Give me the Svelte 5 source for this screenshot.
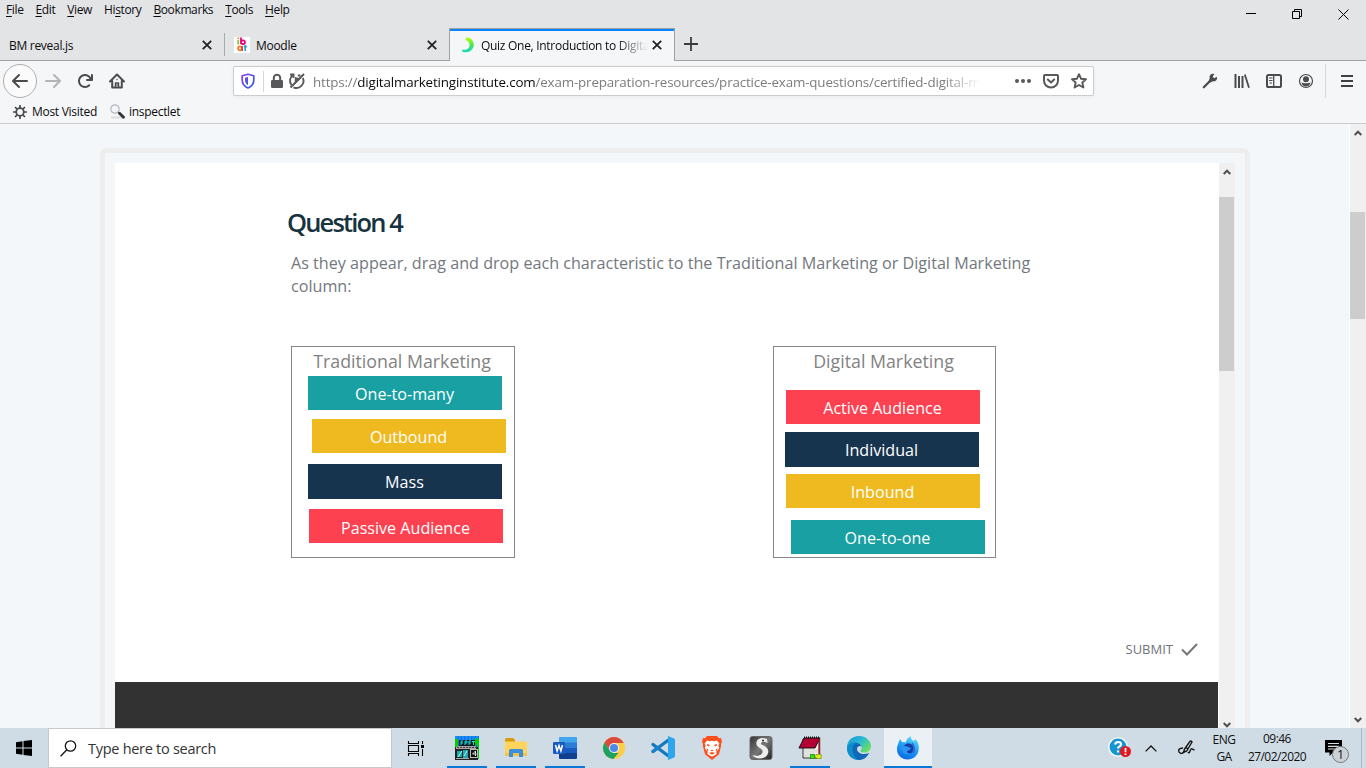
<script>
  const menus = ['File', 'Edit', 'View', 'History', 'Bookmarks', 'Tools', 'Help'];
  const keys = [0, 0, 0, 2, 0, 0, 0];
  const columns = [
    {
      title: 'Traditional Marketing',
      chips: [
        { text: 'One-to-many', color: '#18a0a3', x: 16, y: 29, h: 34 },
        { text: 'Outbound', color: '#efb920', x: 20, y: 72, h: 34 },
        { text: 'Mass', color: '#17344f', x: 16, y: 117, h: 35 },
        { text: 'Passive Audience', color: '#fe4150', x: 17, y: 162, h: 34 }
      ]
    },
    {
      title: 'Digital Marketing',
      chips: [
        { text: 'Active Audience', color: '#fe4150', x: 12, y: 43, h: 34 },
        { text: 'Individual', color: '#17344f', x: 11, y: 85, h: 35 },
        { text: 'Inbound', color: '#efb920', x: 12, y: 127, h: 34 },
        { text: 'One-to-one', color: '#18a0a3', x: 17, y: 173, h: 34 }
      ]
    }
  ];
</script>

{#snippet closeMark()}
  <svg class="close" width="10" height="10" viewBox="0 0 10 10"><path d="M.8.8l8.4 8.4M9.2.8L.8 9.2" stroke="#222" stroke-width="1.8" /></svg>
{/snippet}

{#snippet arrow(down)}
  <svg width="8" height="6" viewBox="0 0 8 6"><path d={down ? 'M.7 1L4 4.3 7.3 1' : 'M.7 5L4 1.7 7.3 5'} fill="none" stroke="#505050" stroke-width="2" /></svg>
{/snippet}

<div class="screen">
  <header class="titlebar">
    <div class="menurow">
      <nav>
        {#each menus as m, i}
          <span>{m.slice(0, keys[i])}<u>{m[keys[i]]}</u>{m.slice(keys[i] + 1)}</span>
        {/each}
      </nav>
      <div class="winctl">
        <svg width="10" height="10" viewBox="0 0 10 10"><path d="M0 4.5h10" stroke="#000" /></svg>
        <svg width="10" height="10" viewBox="0 0 10 10" fill="none" stroke="#000"><path d="M.5 2.5h7v7h-7zM2.500 2.500v-2h7v7h-2" /></svg>
        <svg width="11" height="11" viewBox="0 0 11 11"><path d="M.5.5l10 10M10.500.5l-10 10" stroke="#000" /></svg>
      </div>
    </div>
    <div class="tabs">
      <div class="tab first"><span class="label">BM reveal.js</span>{@render closeMark()}</div>
      <div class="tab second">
        <svg class="fav" width="16" height="16" viewBox="0 0 16 16">
          <path fill="#fff" d="M0 0h16v16H0z" />
          <path d="M4.200 3v4.500" stroke="#8cc63f" stroke-width="1.800" /><path d="M4.200.6v1.500" stroke="#f7931e" stroke-width="1.800" />
          <path d="M7 .5v6.500M7 5.200a2 1.900 0 1 1 0 .1" fill="none" stroke="#e6007e" stroke-width="1.800" />
          <ellipse cx="6" cy="11.300" rx="2" ry="2" fill="none" stroke="#f47b20" stroke-width="1.800" /><path d="M8.200 9v5" stroke="#e6382e" stroke-width="1.500" />
          <path d="M11.200 8v6M9.800 9.700h3" stroke="#1fa6dc" stroke-width="1.700" />
        </svg>
        <span class="label">Moodle</span>{@render closeMark()}
      </div>
      <div class="tab active">
        <svg class="fav" width="16" height="16" viewBox="0 0 16 16">
          <defs><linearGradient id="ring" x1="0" y1="0" x2="0" y2="1"><stop stop-color="#b6ff00" /><stop offset=".55" stop-color="#42e35f" /><stop offset="1" stop-color="#12d8c4" /></linearGradient></defs>
          <path d="M5 .5C9 0 12.800 3.200 12.800 7.800 12.800 12.500 8 16.800 1.500 14.800L1 12.500C5.500 13.500 8.600 11.500 8.600 8 8.600 5 7 3.500 4.700 3.200z" fill="url(#ring)" />
        </svg>
        <span class="label fade">Quiz One, Introduction to Digita</span>{@render closeMark()}
      </div>
      <svg class="plus" width="14" height="14" viewBox="0 0 14 14"><path d="M7 0v14M0 7h14" stroke="#3b3c3d" stroke-width="1.800" /></svg>
    </div>
  </header>

  <div class="toolbar">
    <div class="navbtns">
      <span class="back"><svg width="16" height="16" viewBox="0 0 16 16" fill="none" stroke="#4b4b4e" stroke-width="2" stroke-linecap="round" stroke-linejoin="round"><path d="M15 8H1.500M7 2L1 8l6 6" /></svg></span>
      <svg width="16" height="16" viewBox="0 0 16 16" fill="none" stroke="#b4b5b7" stroke-width="2" stroke-linecap="round" stroke-linejoin="round"><path d="M1 8h13.500M9 2l6 6-6 6" /></svg>
      <svg width="16" height="16" viewBox="0 0 16 16" fill="#4b4b4e"><path d="M15 1a1 1 0 0 0-1 1v2.418A6.995 6.995 0 1 0 8 15a6.954 6.954 0 0 0 4.950-2.050 1 1 0 0 0-1.414-1.414A5.019 5.019 0 1 1 12.549 6H10a1 1 0 0 0 0 2h5a1 1 0 0 0 1-1V2a1 1 0 0 0-1-1z" /></svg>
      <svg width="16" height="16" viewBox="0 0 16 16" fill="none" stroke="#4b4b4e" stroke-width="2" stroke-linecap="round" stroke-linejoin="round"><path d="M1 8.500L8 1.500l7 7M3.200 8v6.500h9.600V8" /><path d="M6.500 14v-4h3v4" stroke-width="1.500" /><path d="M8 6.500v.2M8 11.700v.5" stroke-width="1.300" /></svg>
    </div>
    <div class="urlbar">
      <svg class="shield" width="14" height="16" viewBox="0 0 14 16"><defs><linearGradient id="sh" x2="1" y2="1"><stop stop-color="#8a3cf0" /><stop offset="1" stop-color="#2b5fe0" /></linearGradient></defs><path d="M7 1.200l5.800 1.500V7c0 4-2.300 6.500-5.800 8C3.500 13.500 1.200 11 1.200 7V2.700z" fill="none" stroke="url(#sh)" stroke-width="1.700" stroke-linejoin="round" /><path d="M7 4v8.200C5 11 4 9.300 4 7V4.700z" fill="url(#sh)" /></svg>
      <i class="vsep"></i>
      <svg class="lock" width="12" height="14" viewBox="0 0 12 14"><path d="M2.800 7V4a3.200 3.200 0 0 1 6.400 0v3" fill="none" stroke="#58585a" stroke-width="2" /><rect y="6" width="12" height="8" rx="1.200" fill="#58585a" /></svg>
      <svg class="auto" width="16" height="16" viewBox="0 0 16 16" fill="none" stroke="#58585a" stroke-width="1.900"><path d="M1 1.500h3.500V5M4.200 1.800A7 7 0 0 0 2.500 12M4.500 14.300A7 7 0 0 0 13.800 5M11.500 2.500H8.800" /><path d="M5.800 4v7l6-5.500z" fill="#58585a" stroke="none" /><path d="M1.500 14.500L15 1" /></svg>
      <span class="url">https://<b>digitalmarketinginstitute.com</b>/exam-preparation-resources/practice-exam-questions/certified-digital-m</span>
      <svg class="dots" width="16" height="4" viewBox="0 0 16 4" fill="#58585a"><circle cx="2" cy="2" r="2" /><circle cx="8" cy="2" r="2" /><circle cx="14" cy="2" r="2" /></svg>
      <svg width="16" height="16" viewBox="0 0 16 16" fill="none" stroke="#58585a" stroke-width="2" stroke-linecap="round" stroke-linejoin="round"><path d="M2 2h12a1 1 0 0 1 1 1v4.500a7 7 0 0 1-14 0V3a1 1 0 0 1 1-1z" /><path d="M4.800 6.500L8 9.500l3.200-3" /></svg>
      <svg width="16" height="16" viewBox="0 0 16 16" fill="none" stroke="#58585a" stroke-width="1.900" stroke-linejoin="round"><path d="M8 1.200l2 4.500 5 .5-3.700 3.300 1.100 5L8 12l-4.400 2.500 1.100-5L1 6.200l5-.5z" /></svg>
    </div>
    <div class="tools">
      <svg width="16" height="16" viewBox="0 0 16 16"><path d="M1.800 14.200L9.500 6.500" stroke="#4b4b4e" stroke-width="2.300" stroke-linecap="round" /><path d="M14.800 3.800l-2.600 1.500-1.500-1.500L12.300 1C9.500.3 7 2.300 7.700 5.200L6.500 8.500l1.400 1.300 3-1.500c3 .6 4.800-2 3.900-4.500z" fill="#4b4b4e" /></svg>
      <svg width="16" height="16" viewBox="0 0 16 16" fill="none" stroke="#4b4b4e" stroke-width="2"><path d="M1.500 1v14M5 3v12M8.500 3v12" /><path d="M10.800 1.500L15 14.700" stroke-width="1.800" /></svg>
      <svg width="16" height="16" viewBox="0 0 16 16" fill="none" stroke="#4b4b4e"><rect x="1" y="2" width="14" height="12" rx="1.600" stroke-width="2" /><path d="M7.700 2v12" stroke-width="1.300" /><path d="M3 5h3.500M3 7.500h3.500M3.500 10H6" /></svg>
      <svg width="16" height="16" viewBox="0 0 16 16"><circle cx="8" cy="8" r="6.500" fill="none" stroke="#4b4b4e" stroke-width="1.200" /><circle cx="8" cy="6.300" r="3" fill="#4b4b4e" /><path d="M3.500 9.500c1.500 1 7.500 1 9 0-.4 2.500-2.300 4-4.500 4s-4.100-1.500-4.500-4z" fill="#4b4b4e" /></svg>
      <i class="vsep tall"></i>
      <svg class="burger" width="12" height="12" viewBox="0 0 12 12"><path d="M0 1h12M0 6h12M0 11h12" stroke="#3f4042" stroke-width="2" /></svg>
    </div>
  </div>

  <div class="bookmarks">
    <svg width="14" height="14" viewBox="0 0 14 14" fill="none" stroke="#4b4b4e"><circle cx="7" cy="7" r="3.800" stroke-width="1.800" /><path d="M7 0v3M7 11v3M0 7h3M11 7h3M2 2l2.200 2.200M9.800 9.800L12 12M2 12l2.200-2.200M9.800 4.200L12 2" stroke-width="1.700" /></svg>
    <span class="mv">Most Visited</span>
    <svg width="15" height="15" viewBox="0 0 15 15"><path d="M1 13.500h12" stroke="#ddd" stroke-width="2" /><circle cx="5" cy="5" r="4.200" fill="#f2f5fa" stroke="#b5b8bb" stroke-width="1.200" /><path d="M8 8l2 1.500" stroke="#888" stroke-width="1.500" /><path d="M9.500 9.300l4 4" stroke="#333" stroke-width="2.800" stroke-linecap="round" /></svg>
    <span class="insp">inspectlet</span>
  </div>

  <main>
    <div class="pagebody">
      <div class="frame">
        <div class="quiz">
          <section>
            <h1>Question 4</h1>
            <p>As they appear, drag and drop each characteristic to the Traditional Marketing or Digital Marketing column:</p>
            <div class="columns">
              {#each columns as col}
                <div class="drop">
                  <h2>{col.title}</h2>
                  {#each col.chips as c}
                    <div class="chip" style="left:{c.x}px;top:{c.y}px;height:{c.h}px;background:{c.color}">{c.text}</div>
                  {/each}
                </div>
              {/each}
            </div>
            <div class="submit"><span>SUBMIT</span><svg width="17" height="13" viewBox="0 0 17 13"><path d="M1 6.500l5 5L16 1" fill="none" stroke="#777" stroke-width="2" /></svg></div>
          </section>
          <div class="dark"></div>
        </div>
        <div class="scroll inner">{@render arrow(false)}<i></i>{@render arrow(true)}</div>
      </div>
    </div>
    <div class="scroll outer">{@render arrow(false)}<i></i>{@render arrow(true)}</div>
  </main>

  <footer>
    <div class="start"><svg width="16" height="16" viewBox="0 0 16 16"><path d="M0 2.200L6.500 1.300V7.500H0zM7.500 1.100L16 0v7.500H7.500zM0 8.500h6.500v6.200L0 13.800zM7.500 8.500H16V16l-8.500-1.100z" /></svg></div>
    <div class="search">
      <svg width="17" height="17" viewBox="0 0 17 17" fill="none" stroke="#111" stroke-width="1.300"><circle cx="10.500" cy="6" r="5.200" /><path d="M6.800 9.800L.6 16.200" /></svg>
      <span>Type here to search</span>
    </div>
    <div class="taskview"><svg width="16" height="15" viewBox="0 0 16 15" fill="none" stroke="#000" stroke-width="1.100"><path d="M.5 0v2.500h10V0M.5 15v-2.500h10V15M.5 4.500h10v6H.5zM14.500 0v3M14.500 8v7" /><path d="M13 4h3v3h-3z" fill="#000" stroke="none" /></svg></div>
    <div class="apps">
      <div class="app open">
        <svg width="24" height="24" viewBox="0 0 24 24"><path fill="#1670ef" d="M0 0h24v11H0z" /><path d="M0 1h24M0 3h24" stroke="#14b7f2" stroke-dasharray="2 1.500" /><path fill="#0c0" d="M0 3h3v8H0zM20 2l4 1v20h-2V9h-2z" /><path fill="#0a1a20" d="M4 4h16v6H4z" /><path d="M6 9V5h2M6 7h2M10 9V5h2v2h-2M14 9V5h2M14 7h2M17 5.500h3M18.500 5v4" stroke="#18e4e4" fill="none" /><path fill="#222" d="M0 11h23v13H0z" /><path fill="#a5a5a5" d="M1 11l2-1h18v3H1z" /><path d="M2 11.500h20" stroke="#444" stroke-dasharray="2 1" /><path fill="#1ca7ab" d="M2 15h5v6H2zM8 14h5v8H8z" /><path d="M3 21l4-6M9 20l3-5" stroke="#b8ffff" /><path fill="#bbb" d="M15 13h8v9h-8z" /><path fill="#111" d="M16 14h6v7h-6z" /><path d="M20.500 20v-5l-3 3h4" stroke="#ddd" fill="none" /><path d="M1 22.500h13" stroke="#aaa" /></svg>
      </div>
      <div class="app open">
        <svg width="22" height="20" viewBox="0 0 22 20"><path fill="#d99a0b" d="M0 1.500Q0 0 1.500 0H8l2 2v4H0z" /><path fill="#ffd45c" d="M0 3.500h21q1 0 1 1V17q0 1-1 1H1q-1 0-1-1z" /><path fill="#f5c243" d="M0 15h22v2q0 1-1 1H1q-1 0-1-1z" /><path fill="#3b8edb" d="M4 19v-6.500Q4 11 5.500 11h11q1.500 0 1.500 1.500V19h-4v-4H8v4z" /></svg>
      </div>
      <div class="app open">
        <svg width="24" height="22" viewBox="0 0 24 22"><path fill="#41a5ee" d="M7 0h16q1 0 1 1v5H6V1q0-1 1-1z" /><path fill="#2b7cd3" d="M6 5.500h18V11H6z" /><path fill="#185abd" d="M6 11h18v5.500H6z" /><path fill="#103f91" d="M6 16h18v5q0 1-1 1H7q-1 0-1-1z" /><rect y="5" width="12" height="12" rx="1" fill="#185abd" /><path d="M2.500 8l1.600 6L6 8.500 7.900 14l1.600-6" fill="none" stroke="#fff" stroke-width="1.500" /></svg>
      </div>
      <div class="app">
        <svg width="22" height="22" viewBox="0 0 22 22"><circle cx="11" cy="11" r="11" fill="#ffcd43" /><path fill="#db4a3c" d="M1.500 5.500A11 11 0 0 1 20.500 5.500L20.700 6H11L6.700 13.500z" /><path fill="#1ba261" d="M1.500 5.500L6.700 13.500 11 16l-.6 6A11 11 0 0 1 1.500 5.500z" /><path fill="#1ba261" d="M6.500 13.200L11 16h4.500L10.400 22z" /><circle cx="11" cy="11" r="5" fill="#f5f5f5" /><circle cx="11" cy="11" r="4" fill="#4a88ee" /></svg>
      </div>
      <div class="app">
        <svg width="24" height="24" viewBox="0 0 24 24"><path d="M2 8.500L17.500 20M2 15.500L17.500 4" stroke="#1679bd" stroke-width="3.400" stroke-linecap="round" /><path d="M1.300 16l7-5.400" stroke="#1684cc" stroke-width="3" /><path fill="#2ea6ed" d="M17 0l6.200 2.500q.8.500.8 1.500v16q0 1-.8 1.500L17 24z" /></svg>
      </div>
      <div class="app">
        <svg width="20" height="24" viewBox="0 0 20 24"><path fill="#f9501d" d="M5 0h10l2 2.300 2-.2 1 4-1.100 2 .3 1.200L17 18.300 10 24 3 18.300.8 9.300l.3-1.200L0 6.100l1-4 2 .2z" /><path fill="#fff" d="M5 4.500l3 .7 2-.5 2 .5 3-.7 2.300 3-1 2.500 1 2-3 4 .3 2L10 20.700 5.400 18l.3-2-3-4 1-2-1-2.500z" /><path fill="#f9501d" d="M5 8l3 1-1 1.500L5 9.500zM15 8l-3 1 1 1.500 2-1zM8.300 14h3.400L10 15.500zM7 17l3-1 3 1-3 1.800zM4.500 12l2 2-1 2zM15.500 12l-2 2 1 2z" /></svg>
      </div>
      <div class="app">
        <svg width="24" height="24" viewBox="0 0 24 24"><defs><linearGradient id="sc" x2="1" y2="1"><stop stop-color="#333" /><stop offset=".5" stop-color="#777" /><stop offset="1" stop-color="#222" /></linearGradient></defs><rect x="1" y=".5" width="22" height="23" rx="2.500" fill="url(#sc)" stroke="#666" /><path d="M18 3C11 0 6.500 4 7.500 8.500c1 3.500 5.500 3.500 6 6.500.5 4-5 6-10 4 2 4.500 12 5 15-.5 2.500-5-1-8-5-9.500C10 7.500 13.500 4 18.500 7z" fill="#eee" /><circle cx="14" cy="4.500" r="1" fill="#222" /></svg>
      </div>
      <div class="app open">
        <svg width="24" height="24" viewBox="0 0 24 24"><path fill="#f4f4ef" stroke="#333" d="M5 3h16v19H5z" /><path d="M6 14h14M6 16h14M6 18h10M6 20h8" stroke="#bbb" stroke-width=".7" /><path fill="#b60035" stroke="#111" d="M6 2h16l-5 10H1z" /><path d="M6 1.500h16" stroke="#111" stroke-width="2" stroke-dasharray="1 1" /><path d="M21.500 3v15" stroke="#a71b20" stroke-width="1.500" /><path d="M12 20.500h5M14.500 18v5" stroke="#187c00" stroke-width="4" /><path d="M12.500 20.500h4M14.500 18.500v4" stroke="#40df14" stroke-width="2.500" /><path d="M17.500 20.500h6M20.500 18v5" stroke="#738900" stroke-width="4" /><path d="M18 20.500h5M20.500 18.500v4" stroke="#e2ec18" stroke-width="2.500" /></svg>
      </div>
      <div class="app">
        <svg width="24" height="24" viewBox="0 0 24 24"><defs><linearGradient id="ed" x2="1" y2=".7"><stop stop-color="#198ed5" /><stop offset=".5" stop-color="#27b9d6" /><stop offset="1" stop-color="#6be05e" /></linearGradient></defs><path fill="#1267b7" d="M0 12C0 7 4 5.500 9 6c4 .3 6 3 6 5-1-2-5-1-5 2 0 4 6 6.500 12 4-2.500 5-6 7-10 7C5 24 0 19 0 12z" /><path fill="url(#ed)" d="M0 11.500C0 5 5 0 12 0s12 5 12 10c0 5-4 6.500-7 6.500-2.500 0-4-.7-3.500-2 2-2 1.500-4 .2-5.200C10.500 5 3 5.500 0 11.500z" /><path fill="#0aa0d7" opacity=".7" d="M0 12c1-4 5-6 9-5-5 2-5 12 2 17C5 23.500 0 19 0 12z" /></svg>
      </div>
      <div class="app open current">
        <svg width="24" height="24" viewBox="0 0 24 24"><defs><linearGradient id="ff" x1=".7" y1="0" x2=".3" y2="1"><stop stop-color="#5ae0fb" /><stop offset=".5" stop-color="#1d9bf5" /><stop offset="1" stop-color="#0967e5" /></linearGradient></defs><path fill="url(#ff)" d="M4 3l2.200 3.200q2-.7 3.500.2Q11 2 14.500 0q0 3 3 5 1.500-.5 2-2 4 5 3.200 10.500C22 20 17 23.500 11.800 23.500 5.500 23.500 1 19 1 13.500 1 9 2.500 8.500 2.500 6.500z" /><circle cx="12.500" cy="12.500" r="5.200" fill="#153fa8" /><path fill="#2995f1" d="M5 11q4-2 7 0l3 1q-1 2.500-4 3-1 2 4 2.500-6 2.500-9-2.500z" /><path d="M16 7q4 5 1 10" stroke="#3b62ce" stroke-width="1.500" fill="none" /></svg>
      </div>
    </div>
    <div class="tray">
      <svg class="help" width="24" height="22" viewBox="0 0 24 22"><circle cx="10" cy="10" r="9.800" fill="#fff" /><circle cx="10" cy="10" r="8.500" fill="#1595d3" /><path d="M7 7.500Q7.500 5 10.200 5 13 5 13 7.300q0 1.500-1.700 2.300-1.300.7-1.300 2M10 13.500v2" fill="none" stroke="#fff" stroke-width="2.200" /><circle cx="17.500" cy="14.500" r="5.500" fill="#e4171d" /><path d="M17.500 11v4.300M17.500 16.500V18" stroke="#fff" stroke-width="1.800" /></svg>
      <svg class="chev" width="12" height="7" viewBox="0 0 12 7"><path d="M.6 6.400L6 1l5.400 5.400" fill="none" stroke="#111" stroke-width="1.300" /></svg>
      <svg class="pen" width="17" height="16" viewBox="0 0 17 16" fill="none" stroke="#111" stroke-width="1.400"><path d="M5.500 12.500l1-3.500L12 1.300q1.500-.8 2 .7L8.700 11zM8 7.500l2 1.500M5 8C1 8 0 10 1 12s3.500 1.800 5 0M10 12q1 2 2-1t2.500-2q.5 1 2 .5" /></svg>
      <div class="lang"><span>ENG</span><span>GA</span></div>
      <div class="clock"><span class="time">09:46</span><span>27/02/2020</span></div>
      <div class="notif">
        <svg width="17" height="16" viewBox="0 0 17 16"><path d="M0 0h17v12.500H8L4.500 16v-3.500H0z" /><path d="M3 3.500h11M3 6.300h11M3 9h8" stroke="#d2dde6" stroke-width="1.200" /></svg>
        <span>1</span>
      </div>
      <i class="edge"></i>
    </div>
  </footer>
</div>

<style>
  :global(body) { overflow: hidden; }
  .screen { width: 1366px; height: 768px; display: flex; flex-direction: column; overflow: hidden; font-family: "Open Sans", sans-serif; font-size: 12px; letter-spacing: -.29px; color: #0c0c0d; background: #f5f6f7; }
  .screen * { box-sizing: border-box; }
  svg { display: block; flex: none; overflow: visible; }
  span { white-space: nowrap; }
  .titlebar { height: 61px; flex: none; background: #e3e4e6; display: flex; flex-direction: column; box-shadow: inset 0 -1px #a0a1a3; }
  .menurow { height: 28px; display: flex; justify-content: space-between; }
  nav { display: flex; padding: 2px 0 0 6px; gap: 12px; line-height: 16px; letter-spacing: -.38px; }
  nav u { text-underline-offset: 2px; text-decoration-thickness: 1px; }
  .winctl { display: flex; gap: 36px; align-items: center; padding-right: 17px; }
  .tabs { display: flex; height: 33px; align-items: stretch; }
  .tab { width: 225px; display: flex; align-items: center; position: relative; padding: 1px 12px 0 9px; }
  .tab .close { margin-left: auto; }
  .first { width: 224px; }
  .second { border-left: 1px solid transparent; background: linear-gradient(#a8a9ab, #a8a9ab) 0 5px / 1px 23px no-repeat border-box; }
  .active { width: 226px; background: #f5f6f7; border: 1px solid #a0a1a3; border-top: 0; border-bottom: 0; box-shadow: inset 0 1px #a0a1a3, inset 0 3px #0a84ff; padding-left: 11px; }
  .fav { margin-right: 6px; }
  .active .fav { margin-right: 4px; }
  .fade { width: 168px; mask-image: linear-gradient(90deg, #000 135px, transparent 167px); }
  .plus { align-self: center; margin: 0 0 1px 9px; }
  .toolbar { height: 40px; flex: none; display: flex; align-items: center; }
  .navbtns { width: 233px; display: flex; align-items: center; gap: 16px; padding-left: 3px; }
  .back { width: 34px; height: 34px; margin-right: -8px; border: 1px solid #adaeb0; border-radius: 50%; background: #fbfbfc; display: grid; place-items: center; }
  .urlbar { width: 861px; height: 30px; border: 1px solid #ccc; border-radius: 2px; background: #fff; box-shadow: 0 1px 4px #0000000d; display: flex; align-items: center; padding: 0 6px 0 7px; gap: 12px; }
  .vsep { width: 1px; height: 21px; background: #d7d7db; margin-left: -4px; }
  .lock { margin-left: -5px; }
  .auto { margin-left: -6px; }
  .url { width: 670px; font-size: 13.400px; letter-spacing: -.17px; color: #7c7c7e; margin-left: -4px; mask-image: linear-gradient(90deg, #000 630px, transparent 667px); line-height: 22px; padding-top: 1px; }
  .url b { font-weight: 400; color: #0c0c0d; }
  .dots { margin: 0 0 0 auto; }
  .tools { flex: 1; display: flex; align-items: center; gap: 16px; padding-left: 108px; }
  .tall { height: 34px; margin: 0 0 0 -5px; }
  .burger { margin-left: -1px; }
  .bookmarks { height: 23px; flex: none; display: flex; align-items: center; padding: 0 0 1px 13px; border-bottom: 1px solid #ccc; }
  .mv { margin: 0 13px 0 5px; }
  .insp { margin-left: 4px; }
  main { height: 604px; flex: none; display: flex; background: #f4f7fa; overflow: hidden; }
  .pagebody { flex: 1; padding: 24px 100px 0; }
  .frame { width: 1150px; height: 620px; border: 5px solid #eee; border-radius: 7px; padding: 10px; display: flex; letter-spacing: 0; }
  .quiz { width: 1104px; background: #fff; }
  section { height: 519px; padding: 42px 21px 0 173px; display: flex; flex-direction: column; }
  h1 { margin: 0 0 0 -1px; font-size: 25.500px; line-height: 34px; font-weight: 600; letter-spacing: -1.850px; color: #173340; }
  p { margin: 13px 0 0 3px; width: 760px; font-size: 16.150px; line-height: 23px; color: #73787e; }
  .columns { display: flex; gap: 258px; margin: 48px 0 0 3px; }
  .drop { width: 224px; height: 212px; flex: none; border: 1px solid #868686; position: relative; text-align: center; }
  .drop:last-child { width: 223px; }
  h2 { margin: -1px 0 0 -2px; font-size: 17.800px; line-height: 30px; font-weight: 400; color: #828282; }
  .chip { position: absolute; width: 194px; text-align: center; padding: 7px 1px 0 0; font-size: 16.100px; line-height: 22px; color: #fff; }
  .drop:first-child .chip:last-child { padding-top: 8px; }
  .submit { margin: auto 0 23px auto; display: flex; align-items: center; gap: 8px; font-size: 13px; line-height: 20px; color: #707478; }
  .dark { width: 1103px; height: 90px; background: #323232; }
  .scroll { width: 16px; background: #f0f0f0; display: flex; flex-direction: column; align-items: center; }
  .scroll i { width: 15px; background: #cdcdcd; align-self: flex-start; }
  .inner { padding-top: 6px; height: 565px; }
  .inner i { height: 174px; margin: 22px 0 auto; }
  .outer { padding: 6px 0 5px; box-shadow: -1px 0 #fff; }
  .outer i { height: 107px; margin: 76px 0 auto; }
  footer { height: 40px; flex: none; display: flex; background: #d0dce5; color: #111; }
  .start { width: 48px; display: grid; place-items: center; }
  .search { width: 344px; background: #fff; border: 1px solid #c5c7c9; display: flex; align-items: center; gap: 11px; padding-left: 11px; font-size: 14.500px; letter-spacing: -.28px; color: #333; }
  .taskview { width: 51px; display: grid; place-items: center; padding-right: 3px; }
  .apps { display: flex; gap: 1px; }
  .app { width: 48px; display: grid; place-items: center; }
  .open { background: linear-gradient(#0a78d4, #0a78d4) 4px 38px / 40px 2px no-repeat; }
  .current { background: linear-gradient(#0a78d4, #0a78d4) 0 38px / 48px 2px no-repeat #eaf0f4; }
  .tray { flex: 1; display: flex; align-items: center; padding-left: 176px; }
  .chev { margin-left: 13px; }
  .pen { margin-left: 21px; }
  .lang, .clock { display: flex; flex-direction: column; align-items: center; line-height: 17px; font-size: 12px; letter-spacing: -.55px; }
  .lang { width: 34px; margin-left: 12px; }
  .clock { width: 64px; margin-left: 4px; }
  .time { margin-top: -1px; padding-bottom: 1px; }
  .notif { position: relative; margin-left: 16px; margin-top: -1px; }
  .notif span { position: absolute; left: 7px; top: 6px; width: 17px; height: 17px; border: 1px solid #777; border-radius: 50%; background: #ccd3d8; text-align: center; line-height: 15px; font-size: 12.500px; letter-spacing: 0; }
  .edge { width: 1px; height: 40px; margin-left: auto; margin-right: 4px; background: #aab9c4; }
</style>
